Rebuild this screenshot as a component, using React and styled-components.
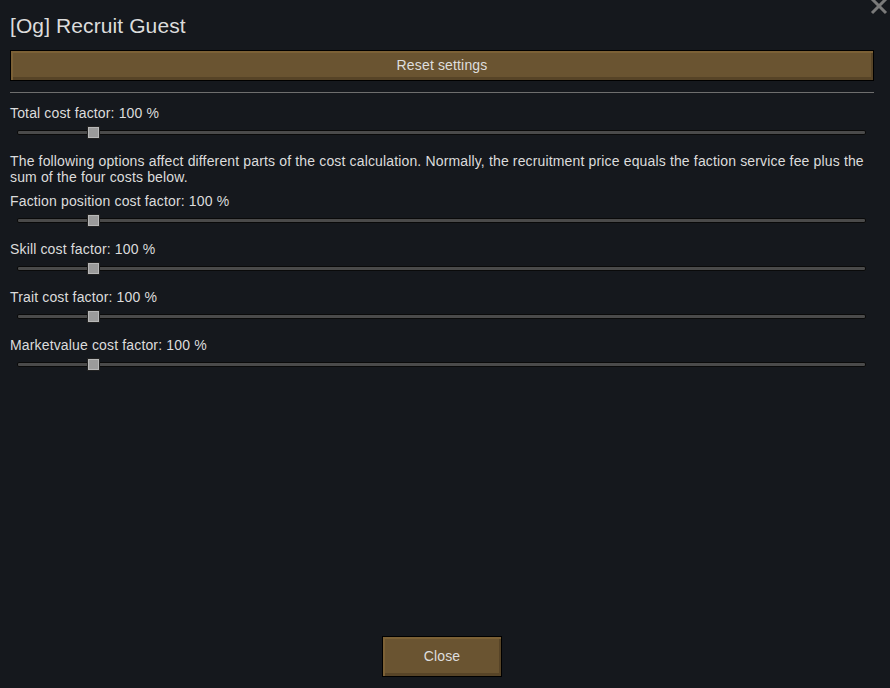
import React from 'react'
import styled, { createGlobalStyle } from 'styled-components'

const GlobalStyle = createGlobalStyle`
  html, body {
    margin: 0;
    padding: 0;
    background: #15181d;
  }
  * {
    box-sizing: border-box;
  }
`

const sliders = [
  { label: 'Faction position cost factor', value: 100 },
  { label: 'Skill cost factor', value: 100 },
  { label: 'Trait cost factor', value: 100 },
  { label: 'Marketvalue cost factor', value: 100 },
]

function Slider({ label, value }) {
  return (
    <SliderBlock>
      <Label>{label}: {value} %</Label>
      <TrackRow>
        <Track>
          <Thumb style={{ left: `calc(${(value / 1000) * 100}% - 15px)` }} />
        </Track>
      </TrackRow>
    </SliderBlock>
  )
}

function App() {
  return (
    <Window>
      <GlobalStyle />
      <CloseX viewBox="0 0 18 18" aria-hidden="true">
        <path d="M2 2 L16 16 M16 2 L2 16" />
      </CloseX>

      <Title>[Og] Recruit Guest</Title>
      <WideButton>Reset settings</WideButton>
      <Separator />

      <Slider label="Total cost factor" value={100} />

      <Paragraph>
        The following options affect different parts of the cost calculation. Normally, the recruitment price equals the faction service fee plus the sum of the four costs below.
      </Paragraph>

      {sliders.map((s) => (
        <Slider key={s.label} label={s.label} value={s.value} />
      ))}

      <Footer>
        <CloseButton>Close</CloseButton>
      </Footer>
    </Window>
  )
}

export default App

const Window = styled.div`
  position: relative;
  display: flex;
  flex-direction: column;
  height: 100vh;
  overflow: hidden;
  padding: 14px 16px 11px 10px;
  background: #15181d;
  color: #dcdcdc;
  font-family: "Liberation Sans", Arial, sans-serif;
`

const CloseX = styled.svg`
  position: absolute;
  top: -3px;
  right: 2px;
  width: 18px;
  height: 18px;

  path {
    stroke: #7a7a7a;
    stroke-width: 3;
    fill: none;
  }
`

const Title = styled.div`
  font-size: 21px;
  line-height: 23px;
  height: 23px;
  letter-spacing: 0.1px;
`

const bevel = `
  border: 1px solid #000;
  background: #6a5431;
  box-shadow:
    inset 2px 2px 0 #7c6136,
    inset -2px -3px 0 #574427;
  color: #dedede;
  font-family: "Liberation Sans", Arial, sans-serif;
  font-size: 14px;
  letter-spacing: 0.15px;
  cursor: pointer;
`

const WideButton = styled.button`
  ${bevel}
  margin-top: 13px;
  height: 31px;
  width: 100%;
  padding: 0 0 2px;
`

const Separator = styled.div`
  margin-top: 11px;
  margin-bottom: 12px;
  height: 1px;
  background: #6e6e6e;
`

const SliderBlock = styled.div`
  display: flex;
  flex-direction: column;
`

const Label = styled.div`
  font-size: 14px;
  line-height: 16px;
  letter-spacing: 0.15px;
`

const TrackRow = styled.div`
  height: 22px;
  margin-bottom: 10px;
  padding: 0 8px 0 7px;
  display: flex;
  align-items: center;
`

const Track = styled.div`
  position: relative;
  flex: 1;
  height: 5px;
  border: 1px solid #0a0a0a;
  border-radius: 2px;
  background: #4a4a4a;
`

const Thumb = styled.div`
  position: absolute;
  top: -4px;
  width: 11px;
  height: 11px;
  background: #9b9b9b;
  border: 1px solid #b8b8b8;
  box-shadow: 0 0 0 1px #222;
`

const Paragraph = styled.p`
  margin: 0 0 8px;
  font-size: 14px;
  line-height: 16px;
  letter-spacing: 0.15px;
`

const Footer = styled.div`
  margin-top: auto;
  display: flex;
  justify-content: center;
`

const CloseButton = styled.button`
  ${bevel}
  width: 120px;
  height: 41px;
  padding: 0 0 2px;
`
